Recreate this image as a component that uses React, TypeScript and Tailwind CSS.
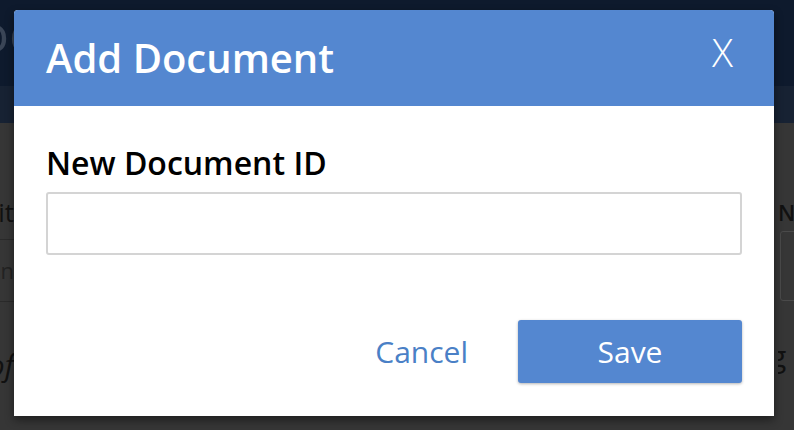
import { useState } from 'react'

const FONT = { fontFamily: '"Open Sans", "Liberation Sans", sans-serif' }

// dimmed page that sits behind the dialog
function BackgroundPage() {
  return (
    <div className="flex h-full w-full flex-col bg-[#363636]">
      <div className="flex h-[86px] items-start overflow-hidden bg-[#0e1a2d]">
        <div className="-ml-[60px] mt-[6px] text-[52px] leading-none text-[#3a4556]">Docs</div>
      </div>
      <div className="h-[37px] bg-[#172233]" />
      <div className="flex flex-1 justify-between pt-[72px]">
        <div className="flex w-[14px] flex-col overflow-hidden">
          <div className="flex justify-end whitespace-nowrap text-[26px] leading-[34px] text-[#111]">Edit</div>
          <div className="mt-[10px] h-px w-full bg-[#2a2a2a]" />
          <div className="flex h-[61px] items-center justify-end text-[22px] text-[#222]">n</div>
          <div className="h-px w-full bg-[#2a2a2a]" />
          <div className="mt-[48px] flex justify-end whitespace-nowrap text-[30px] italic leading-none text-[#111]">of</div>
        </div>
        <div className="flex w-[16px] flex-col overflow-hidden pt-[4px]">
          <div className="whitespace-nowrap text-[22px] font-semibold leading-[26px] text-[#111]">Name</div>
          <div className="ml-[2px] mt-[6px] h-[70px] w-[40px] rounded-[3px] border border-[#4a4a4a]" />
          <div className="-ml-[8px] mt-[40px] whitespace-nowrap text-[30px] leading-none text-[#111]">g</div>
        </div>
      </div>
    </div>
  )
}

export default function App() {
  const [docId, setDocId] = useState('')

  return (
    <div className="relative h-[430px] w-[794px] overflow-hidden" style={FONT}>
      <BackgroundPage />

      {/* 모달 */}
      <div className="absolute left-[14px] top-[10px] flex w-[760px] flex-col overflow-hidden rounded-t-[4px] bg-white shadow-[0_4px_10px_rgba(0,0,0,0.45)]">
        <div className="flex h-[96px] items-start justify-between bg-[#5487d0] pl-[32px] pr-[41px]">
          <div className="mt-[20px] text-[40px] font-semibold leading-[56px] text-white">Add Document</div>
          <button className="mt-[15px] text-[39px] font-light leading-[54px] text-white">X</button>
        </div>

        <div className="flex flex-col px-[32px] pb-[33px] pt-[33px]">
          <label className="text-[32px] font-semibold leading-[48px] text-black">New Document ID</label>
          <input
            value={docId}
            onChange={(e) => setDocId(e.target.value)}
            className="mt-[5px] h-[63px] w-full rounded-[3px] border-2 border-[#d4d4d4] px-3 text-[24px] outline-none"
          />

          <div className="mt-[65px] flex items-center justify-end gap-[50px]">
            <button className="text-[30px] leading-[42px] text-[#4a80c6]">Cancel</button>
            <button className="flex h-[63px] w-[224px] items-center justify-center rounded-[3px] bg-[#5487d0] text-[30px] text-white shadow-[0_1px_3px_rgba(0,0,0,0.3)]">
              Save
            </button>
          </div>
        </div>
      </div>
    </div>
  )
}
